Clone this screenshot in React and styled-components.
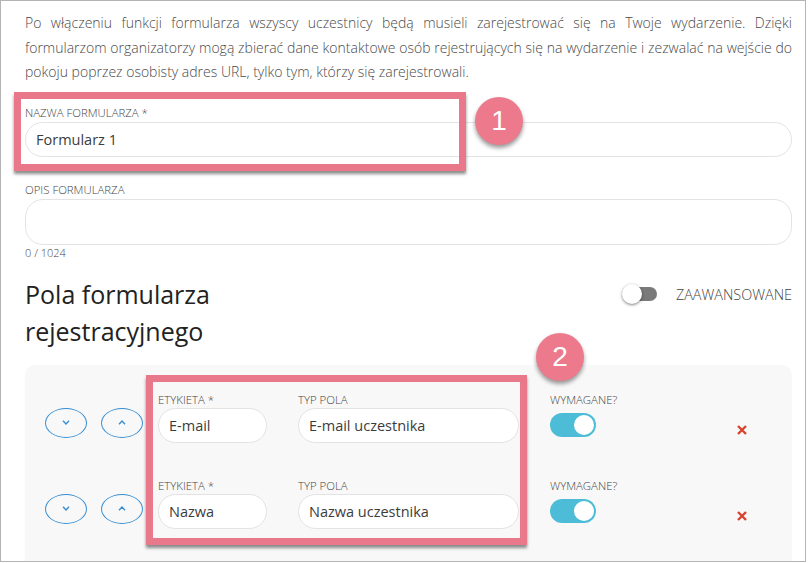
import styled, { createGlobalStyle } from "styled-components";

const GlobalStyle = createGlobalStyle`
  html, body {
    margin: 0;
    background: #fff;
  }
  body {
    font-family: "Open Sans", "Liberation Sans", sans-serif;
    color: #333;
  }
`;

const Frame = styled.div`
  position: relative;
  box-sizing: border-box;
  width: 806px;
  height: 562px;
  border: 1px solid #b4b4b4;
  overflow: hidden;
  padding: 10px 13px 0 24px;
`;

const Intro = styled.p`
  margin: 0;
  font-size: 14px;
  font-weight: 300;
  line-height: 24.5px;
  color: #4a4a4a;
  text-align: justify;
`;

const Field = styled.div`
  margin-top: ${(p) => p.$top || 0}px;
`;

const Label = styled.div`
  font-size: 11.4px;
  font-weight: 300;
  line-height: 14px;
  color: #444;
  text-transform: uppercase;
  margin-bottom: ${(p) => p.$gap ?? 2}px;
  white-space: nowrap;
`;

const Input = styled.div`
  box-sizing: border-box;
  width: ${(p) => (p.$width ? `${p.$width}px` : "100%")};
  height: ${(p) => p.$height || 35}px;
  border: 1px solid #e3e3e3;
  border-radius: 18px;
  background: #fff;
  padding: 0 10px;
  display: flex;
  align-items: center;
  font-size: 14.5px;
  color: #3c3c3c;
`;

const Counter = styled.div`
  font-size: 11px;
  font-weight: 300;
  line-height: 14px;
  color: #444;
  margin-top: 1px;
`;

const HeadingRow = styled.div`
  display: flex;
  justify-content: space-between;
  align-items: flex-start;
  margin-top: 16px;
`;

const Heading = styled.h2`
  margin: 0;
  width: 300px;
  font-size: 25px;
  font-weight: 400;
  line-height: 37px;
  color: #222;
`;

const ToggleGroup = styled.div`
  display: flex;
  align-items: center;
  height: 37px;
`;

const OffTrack = styled.div`
  position: relative;
  width: 31px;
  height: 14px;
  margin-left: 4px;
  border-radius: 7px;
  background: #7a7a7a;
`;

const OffKnob = styled.div`
  position: absolute;
  left: -4px;
  top: -3px;
  width: 20px;
  height: 20px;
  border-radius: 50%;
  background: #fff;
  box-shadow: 0 1px 3px rgba(0, 0, 0, 0.5);
`;

const ToggleText = styled.span`
  margin-left: 19px;
  font-size: 14.4px;
  font-weight: 300;
  color: #444;
`;

const Panel = styled.div`
  margin-top: 15px;
  background: #f8f8f8;
  border-radius: 10px;
  padding: 28px 0 40px 20px;
  display: flex;
  flex-direction: column;
  gap: 36px;
`;

const Row = styled.div`
  display: flex;
  align-items: flex-end;
`;

const Arrows = styled.div`
  display: flex;
  gap: 14px;
  margin: 0 15px 5px 0;
`;

const ArrowBtn = styled.div`
  box-sizing: border-box;
  width: 42px;
  height: 30px;
  border: 1px solid #3a8fd2;
  border-radius: 50%;
  display: flex;
  align-items: center;
  justify-content: center;
`;

const Gap = styled.div`
  width: ${(p) => p.$w}px;
  flex: none;
`;

const Required = styled.div`
  width: 187px;
  flex: none;
  display: flex;
  flex-direction: column;
  align-items: flex-start;
  padding-bottom: 6px;
`;

const OnTrack = styled.div`
  box-sizing: border-box;
  width: 46px;
  height: 24px;
  margin-top: 6px;
  border-radius: 12px;
  background: #4dbdd7;
  padding: 2px;
  display: flex;
  justify-content: flex-end;
`;

const OnKnob = styled.div`
  width: 20px;
  height: 20px;
  border-radius: 50%;
  background: #fff;
`;

const Remove = styled.div`
  margin-bottom: 8px;
  display: flex;
`;

const Highlight = styled.div`
  position: absolute;
  box-sizing: border-box;
  border: 7px solid #e9788b;
  box-shadow: 0 3px 3px rgba(0, 0, 0, 0.45);
  pointer-events: none;
`;

const Badge = styled.div`
  position: absolute;
  width: 48px;
  height: 48px;
  border-radius: 50%;
  background: #ec7a8c;
  box-shadow: 0 3px 4px rgba(0, 0, 0, 0.4);
  color: #fff;
  font-family: "Liberation Sans", Arial, sans-serif;
  font-size: 28px;
  display: flex;
  align-items: center;
  justify-content: center;
`;

function Chevron({ up }) {
  return (
    <svg width="8" height="5" viewBox="0 0 8 5">
      <polyline
        points={up ? "1,4.2 4,1 7,4.2" : "1,0.8 4,4 7,0.8"}
        fill="none"
        stroke="#3a8fd2"
        strokeWidth="1.4"
      />
    </svg>
  );
}

function Cross() {
  return (
    <svg width="10" height="10" viewBox="0 0 10 10">
      <path d="M1 1 L9 9 M9 1 L1 9" stroke="#d8432f" strokeWidth="2.4" />
    </svg>
  );
}

const fields = [
  { label: "E-mail", type: "E-mail uczestnika" },
  { label: "Nazwa", type: "Nazwa uczestnika" },
];

export default function App() {
  return (
    <>
      <GlobalStyle />
      <Frame>
        <Intro>
          Po włączeniu funkcji formularza wszyscy uczestnicy będą musieli
          zarejestrować się na Twoje wydarzenie. Dzięki formularzom organizatorzy
          mogą zbierać dane kontaktowe osób rejestrujących się na wydarzenie i
          zezwalać na wejście do pokoju poprzez osobisty adres URL, tylko tym,
          którzy się zarejestrowali.
        </Intro>

        <Field $top={21}>
          <Label>Nazwa formularza *</Label>
          <Input>Formularz 1</Input>
        </Field>

        <Field $top={26}>
          <Label>Opis formularza</Label>
          <Input $height={46} />
          <Counter>0 / 1024</Counter>
        </Field>

        <HeadingRow>
          <Heading>Pola formularza rejestracyjnego</Heading>
          <ToggleGroup>
            <OffTrack>
              <OffKnob />
            </OffTrack>
            <ToggleText>ZAAWANSOWANE</ToggleText>
          </ToggleGroup>
        </HeadingRow>

        <Panel>
          {fields.map((f) => (
            <Row key={f.label}>
              <Arrows>
                <ArrowBtn>
                  <Chevron />
                </ArrowBtn>
                <ArrowBtn>
                  <Chevron up />
                </ArrowBtn>
              </Arrows>
              <div>
                <Label $gap={1}>Etykieta *</Label>
                <Input $width={109}>{f.label}</Input>
              </div>
              <Gap $w={31} />
              <div>
                <Label $gap={1}>Typ pola</Label>
                <Input $width={221}>{f.type}</Input>
              </div>
              <Gap $w={31} />
              <Required>
                <Label $gap={0}>Wymagane?</Label>
                <OnTrack>
                  <OnKnob />
                </OnTrack>
              </Required>
              <Remove>
                <Cross />
              </Remove>
            </Row>
          ))}
        </Panel>

        <Highlight style={{ left: 13, top: 91, width: 452, height: 79 }} />
        <Badge style={{ left: 474, top: 96 }}>1</Badge>
        <Highlight style={{ left: 145, top: 374, width: 381, height: 170 }} />
        <Badge style={{ left: 535, top: 332 }}>2</Badge>
      </Frame>
    </>
  );
}
